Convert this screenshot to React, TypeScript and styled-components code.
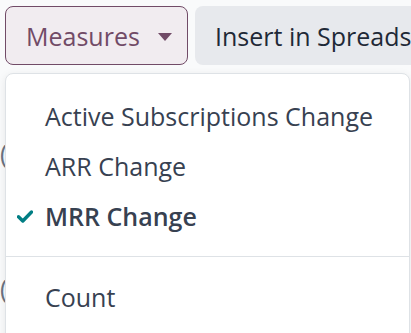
import React from 'react';
import styled, { createGlobalStyle } from 'styled-components';

const GlobalStyle = createGlobalStyle`
  html, body {
    margin: 0;
    padding: 0;
    background: #f9fafb;
    font-family: "Open Sans", "Noto Sans", sans-serif;
    overflow: hidden;
  }
`;

const measures = [
  { label: 'Active Subscriptions Change', active: false },
  { label: 'ARR Change', active: false },
  { label: 'MRR Change', active: true },
];

const App = () => {
  return (
    <>
      <GlobalStyle />
      <Page>
        <Paren top={138}>(</Paren>
        <Paren top={273}>(</Paren>
        <Toolbar>
          <MeasuresButton>
            Measures
            <Caret />
          </MeasuresButton>
          <InsertButton>Insert in Spreadsheet</InsertButton>
        </Toolbar>
        <Dropdown>
          {measures.map((m) => (
            <Item key={m.label} active={m.active}>
              <CheckSlot>
                {m.active && (
                  <svg width="16" height="13" viewBox="0 0 16 13">
                    <path d="M1.5 6.8 L5.8 11 L14.5 2" fill="none" stroke="#017e84" strokeWidth="3.4" strokeLinecap="round" strokeLinejoin="round" />
                  </svg>
                )}
              </CheckSlot>
              {m.label}
            </Item>
          ))}
          <Divider />
          <Item active={false}>
            <CheckSlot />
            Count
          </Item>
        </Dropdown>
      </Page>
    </>
  );
};

export default App;

const Page = styled.div`
  position: relative;
  width: 411px;
  height: 333px;
  padding: 6px 0 0 5px;
  box-sizing: border-box;
  overflow: hidden;
`;

const Paren = styled.span<{ top: number }>`
  position: absolute;
  left: 0;
  top: ${(p) => p.top}px;
  color: #6b7280;
  font-size: 25px;
  line-height: 30px;
`;

const Toolbar = styled.div`
  display: flex;
  gap: 7px;
  height: 59px;
  width: 420px;
`;

const MeasuresButton = styled.div`
  display: flex;
  flex-shrink: 0;
  align-items: center;
  gap: 18px;
  box-sizing: border-box;
  width: 183px;
  height: 59px;
  padding: 0 0 0 20px;
  border: 1px solid #714b67;
  border-radius: 8px;
  background: #f1ecf0;
  color: #714b67;
  font-size: 25px;
  font-weight: 500;
`;

const Caret = styled.span`
  width: 0;
  height: 0;
  border-left: 7px solid transparent;
  border-right: 7px solid transparent;
  border-top: 8px solid #714b67;
  margin-top: 2px;
`;

const InsertButton = styled.div`
  display: flex;
  flex-shrink: 0;
  align-items: center;
  box-sizing: border-box;
  height: 59px;
  padding: 0 20px;
  border-radius: 8px;
  background: #e7e9ed;
  color: #1f2937;
  font-size: 25px;
  font-weight: 500;
  white-space: nowrap;
`;

const Dropdown = styled.div`
  position: relative;
  margin-top: 8px;
  width: 405px;
  height: 300px;
  box-sizing: border-box;
  padding-top: 17px;
  background: #ffffff;
  border: 1px solid #dee2e6;
  border-radius: 8px;
  box-shadow: 0 2px 8px rgba(0, 0, 0, 0.08);
`;

const Item = styled.div<{ active: boolean }>`
  display: flex;
  align-items: center;
  height: 50px;
  padding-left: 11px;
  color: #374151;
  font-size: 25px;
  font-weight: ${(p) => (p.active ? 600 : 400)};
  white-space: nowrap;
`;

const CheckSlot = styled.span`
  display: flex;
  align-items: center;
  width: 28px;
`;

const Divider = styled.div`
  height: 1px;
  margin: 15px 0 15px;
  background: #dee2e6;
`;
